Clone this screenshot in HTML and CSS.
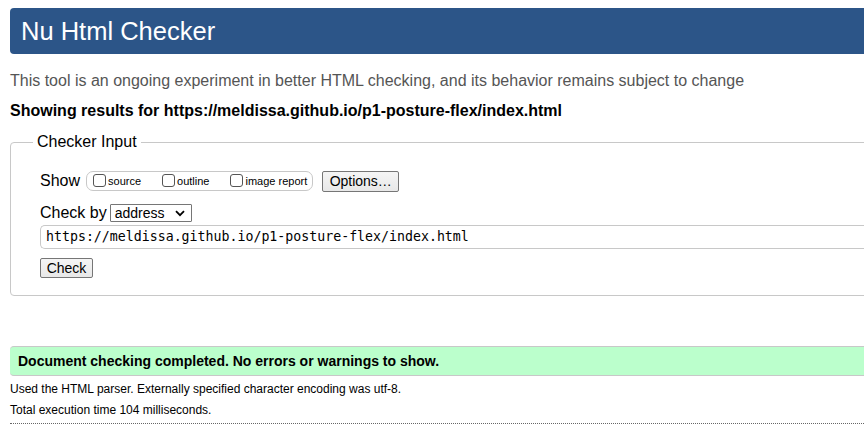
FILE: index.html
```html
<!DOCTYPE html>
<html lang="en">
<head>
<meta charset="utf-8">
<title>Nu Html Checker</title>
<link rel="stylesheet" href="styles.css">
</head>
<body>
<div class="page">
  <h1 class="title">Nu Html Checker</h1>
  <p class="intro">This tool is an ongoing experiment in better HTML checking, and its behavior remains subject to change</p>
  <p class="showing">Showing results for https://meldissa.github.io/p1-posture-flex/index.html</p>
  <fieldset class="checker">
    <legend class="legend">Checker Input</legend>
    <div class="row row-show">
      <span class="label">Show</span>
      <span class="opts">
        <label class="opt"><span class="cb"></span>source</label>
        <label class="opt"><span class="cb"></span>outline</label>
        <label class="opt"><span class="cb"></span>image report</label>
      </span>
      <span class="btn btn-options">Options…</span>
    </div>
    <div class="row row-by">
      <span class="label">Check by</span>
      <span class="select">address<svg class="chev" width="10" height="7" viewBox="0 0 10 7"><path d="M1 1.2 L5 5.2 L9 1.2" fill="none" stroke="#000" stroke-width="1.8"/></svg></span>
    </div>
    <div class="url">https://meldissa.github.io/p1-posture-flex/index.html</div>
    <div class="row row-check"><span class="btn btn-check">Check</span></div>
  </fieldset>
  <p class="success">Document checking completed. No errors or warnings to show.</p>
  <p class="details">Used the HTML parser. Externally specified character encoding was utf-8.</p>
  <p class="details">Total execution time 104 milliseconds.</p>
  <hr class="dotted">
</div>
</body>
</html>
```
FILE: styles.css
```css
html, body {
  margin: 0;
  padding: 0;
  overflow: hidden;
  background: #fff;
}
body {
  font-family: "Liberation Sans", Arial, sans-serif;
  color: #000;
}
.page {
  width: 900px;
  padding: 8px 0 0 10px;
}
.title {
  margin: 0;
  height: 46px;
  line-height: 46px;
  padding-left: 11px;
  font-size: 25.5px;
  font-weight: normal;
  color: #fff;
  background: #2c5588;
  border-radius: 4px 0 0 4px;
}
.intro {
  margin: 18px 0 0;
  font-size: 16px;
  line-height: 18px;
  color: #555;
}
.showing {
  margin: 12px 0 0;
  font-size: 16px;
  line-height: 18px;
  font-weight: bold;
}
.checker {
  margin: 13px 0 0;
  padding: 0 0 17px 29px;
  border: 1px solid #c8c8c8;
  border-radius: 4px;
}
.legend {
  margin-left: -7px;
  padding: 0 4px;
  font-size: 16px;
  line-height: 18px;
}
.row {
  display: flex;
  align-items: center;
}
.label {
  font-size: 16px;
  line-height: 18px;
}
.row-show {
  margin-top: 19px;
  height: 22px;
}
.opts {
  display: flex;
  align-items: center;
  margin-left: 6px;
  height: 18px;
  padding: 0 5px 0 6px;
  border: 1px solid #c8c8c8;
  border-radius: 7px;
  font-size: 11px;
}
.opt {
  display: flex;
  align-items: center;
  margin-right: 21px;
}
.opt:last-child {
  margin-right: 0;
}
.cb {
  width: 11px;
  height: 11px;
  border: 1px solid #555;
  border-radius: 3px;
  margin-right: 2px;
  margin-top: -2px;
}
.btn {
  display: inline-flex;
  align-items: center;
  justify-content: center;
  box-sizing: border-box;
  border: 1px solid #767676;
  border-radius: 2px;
  background: linear-gradient(#f5f5f5, #e8e8e8);
  font-size: 14px;
}
.btn-options {
  margin-left: 9px;
  width: 77px;
  height: 21px;
}
.row-by {
  margin-top: 11px;
  height: 20px;
}
.select {
  display: inline-flex;
  align-items: center;
  justify-content: space-between;
  box-sizing: border-box;
  margin-left: 3px;
  width: 82px;
  height: 18px;
  padding: 0 6px 0 4px;
  border: 1px solid #767676;
  border-radius: 1px;
  font-size: 14px;
}
.url {
  margin-top: 2px;
  box-sizing: border-box;
  height: 24px;
  line-height: 22px;
  padding-left: 5px;
  border: 1px solid #c8c8c8;
  border-right: 0;
  border-radius: 5px 0 0 5px;
  font-family: "DejaVu Sans Mono", monospace;
  font-size: 13.25px;
}
.row-check {
  margin-top: 9px;
}
.btn-check {
  width: 53px;
  height: 20px;
}
.success {
  margin: 50px 0 0;
  box-sizing: border-box;
  height: 30px;
  line-height: 28px;
  padding-left: 8px;
  background: #bfc;
  border-top: 1px solid #c8c8c8;
  border-bottom: 1px solid #c8c8c8;
  border-radius: 4px 0 0 4px;
  font-size: 14px;
  font-weight: bold;
}
.details {
  margin: 5px 0 0;
  font-size: 12px;
  line-height: 16px;
}
.details + .details {
  margin-top: 5px;
}
.dotted {
  margin: 5px 0 0;
  border: 0;
  border-top: 1px dotted #666;
  height: 0;
}
```
